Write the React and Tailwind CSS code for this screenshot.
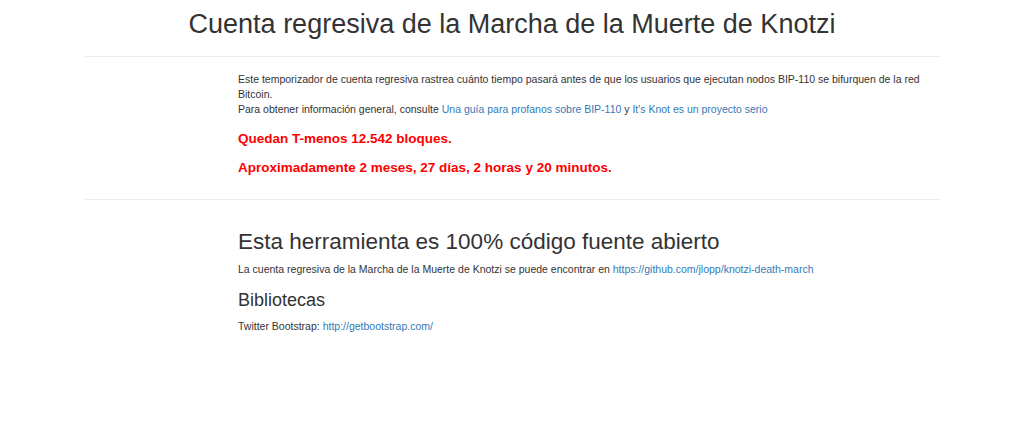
const LINK = 'text-[#337ab7] no-underline';

export default function App() {
  return (
    <div className="min-h-[442px] bg-white font-['Liberation_Sans',Arial,sans-serif] text-[#333] text-[10.5px] leading-[15px]">
      <div className="w-[855px] mx-auto">
        <div className="pt-[9px] pb-[17px] border-b border-[#eee]">
          <h1 className="text-center text-[27px] leading-[30px] font-normal">
            Cuenta regresiva de la Marcha de la Muerte de Knotzi
          </h1>
        </div>

        <div className="pl-[153.5px]">
          <div className="w-[701px]">
            <p className="mt-[14.5px]">
              Este temporizador de cuenta regresiva rastrea cuánto tiempo pasará antes de que los usuarios que
              ejecutan nodos BIP-110 se bifurquen de la red Bitcoin.
              <br />
              Para obtener información general, consulte{' '}
              <a href="#" className={LINK}>Una guía para profanos sobre BIP-110</a> y{' '}
              <a href="#" className={LINK}>It's Knot es un proyecto serio</a>
            </p>
            <h4 className="mt-[14px] text-[13.5px] leading-[15px] font-bold text-[#ff0000]">
              Quedan T-menos 12.542 bloques.
            </h4>
            <h4 className="mt-[14px] text-[13.5px] leading-[15px] font-bold text-[#ff0000]">
              Aproximadamente 2 meses, 27 días, 2 horas y 20 minutos.
            </h4>
          </div>
        </div>

        <div className="mt-[24px] h-px bg-[#eee]" />

        <div className="pl-[153.5px]">
          <h2 className="mt-[29.5px] text-[22.5px] leading-[25px] font-normal">
            Esta herramienta es 100% código fuente abierto
          </h2>
          <p className="mt-[8px]">
            La cuenta regresiva de la Marcha de la Muerte de Knotzi se puede encontrar en{' '}
            <a href="#" className={LINK}>https://github.com/jlopp/knotzi-death-march</a>
          </p>
          <h3 className="mt-[13px] text-[18px] leading-[20px] font-normal">Bibliotecas</h3>
          <p className="mt-[8.5px]">
            Twitter Bootstrap: <a href="#" className={LINK}>http://getbootstrap.com/</a>
          </p>
        </div>
      </div>
    </div>
  );
}
